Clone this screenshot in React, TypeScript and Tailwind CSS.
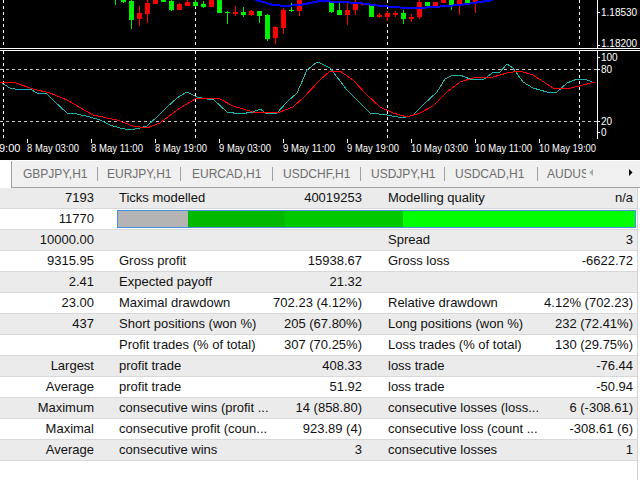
import React from 'react';

type Candle = [number, number, number, number, number, 'g' | 'r'];

// center x, body top, body bottom, wick top, wick bottom, colour
const candles: Candle[] = [
  [115.5, -4, -1, 0, 5, 'g'],
  [123.5, 0, 2, 0, 3, 'g'],
  [131.5, 1, 20, 0, 29, 'g'],
  [139.5, 13, 19, 6, 26, 'r'],
  [147.5, 3, 14, 0, 23, 'r'],
  [155.5, 0, 4, 0, 4, 'r'],
  [163.5, 0, 2, 0, 2, 'g'],
  [171.5, 1, 10, 0, 11, 'g'],
  [179.5, 4, 10, 3, 10, 'r'],
  [187.5, 2, 6, 0, 6, 'r'],
  [195.5, 2, 6, 0, 7, 'g'],
  [203.5, 4, 7, 1, 8, 'g'],
  [211.5, 0, 7, 0, 7, 'r'],
  [219.5, 0, 13, 0, 13, 'g'],
  [227.5, 12, 13, 11, 24, 'g'],
  [235.5, 12, 14, 6, 16, 'r'],
  [243.5, 12, 15, 7, 17, 'g'],
  [251.5, 11, 15, 10, 16, 'r'],
  [259.5, 11, 16, 11, 23, 'g'],
  [267.5, 15, 39, 14, 41, 'g'],
  [275.5, 27, 38, 26, 44, 'r'],
  [283.5, 10, 28, 8, 34, 'r'],
  [291.5, 10, 11, 3, 12, 'g'],
  [299.5, 0, 11, 0, 16, 'r'],
  [331.5, 2, 12, 2, 13, 'g'],
  [339.5, 10, 15, 3, 15, 'g'],
  [347.5, 10, 15, 1, 25, 'r'],
  [355.5, 3, 10, 0, 15, 'r'],
  [363.5, 3, 5, 3, 5, 'r'],
  [371.5, 5, 17, 5, 17, 'g'],
  [379.5, 15, 17, 13, 18, 'r'],
  [387.5, 13, 17, 11, 21, 'r'],
  [395.5, 13, 15, 11, 17, 'r'],
  [403.5, 13, 19, 10, 24, 'g'],
  [411.5, 17, 19, 14, 22, 'r'],
  [419.5, 2, 17, 0, 19, 'r'],
  [427.5, 2, 6, 2, 6, 'g'],
  [435.5, 2, 6, 2, 6, 'r'],
  [443.5, 0, 3, 0, 3, 'r'],
  [451.5, 0, 5, 0, 10, 'g'],
  [459.5, 0, 5, 0, 15, 'r'],
  [467.5, 0, 4, 0, 4, 'g'],
  [475.5, 0, 3, 0, 13, 'r'],
];

const maLine =
  '255,0 263,2 270,4 273,5 287,6 297,5 300,5 310,3 320,1 340,2 360,3 380,6 395,7 407,8 420,8 433,7 447,6 460,5 473,3 487,1 493,0';

const stochMain =
  '0,82 10,88 20,90 30,89 37,93 47,94 53,100 67,113 77,114 90,117 100,120 110,125 120,128 130,130 140,128 147,126 157,117 167,107 177,98 187,92 197,97 207,99 213,99 227,112 240,114 253,112 260,109 267,114 277,113 287,102 297,93 307,70 317,62 320,63 330,68 347,90 370,113 387,115 403,118 413,115 423,105 437,92 445,79 453,75 460,75 470,79 483,80 492,73 500,72 507,64 513,68 523,82 533,88 547,92 557,92 567,83 577,79 587,80 595,83';

const stochSignal =
  '0,82 13,82 33,89 50,93 67,100 93,115 117,120 133,126 147,128 160,123 180,108 197,98 207,98 220,99 233,106 253,112 267,113 280,112 293,107 303,98 320,80 330,71 340,71 353,80 367,95 380,107 393,113 407,117 420,113 433,106 447,92 460,82 473,78 493,77 507,73 520,71 533,75 553,88 567,89 583,85 595,82';

const timeLabels: Array<[number, string]> = [
  [27, '8 May 03:00'],
  [91, '8 May 11:00'],
  [155, '8 May 19:00'],
  [219, '9 May 03:00'],
  [283, '9 May 11:00'],
  [347, '9 May 19:00'],
  [411, '10 May 03:00'],
  [475, '10 May 11:00'],
  [539, '10 May 19:00'],
];

function Chart() {
  const font = { fontFamily: "'Liberation Sans', Arial, sans-serif" };
  return (
    <svg width="640" height="160" viewBox="0 0 640 160" className="block" shapeRendering="crispEdges">
      <rect x="0" y="0" width="640" height="160" fill="#000" />

      {/* grid */}
      {[3.5, 195.5, 387.5, 579.5].map((x) => (
        <g key={x}>
          <line x1={x} y1="0" x2={x} y2="48" stroke="#fff" strokeDasharray="3 3" />
          <line x1={x} y1="51" x2={x} y2="138" stroke="#fff" strokeDasharray="3 3" />
        </g>
      ))}
      <line x1="0" y1="69.5" x2="597" y2="69.5" stroke="#c8c8c8" strokeDasharray="3 3" />
      <line x1="0" y1="121.5" x2="597" y2="121.5" stroke="#c8c8c8" strokeDasharray="3 3" />

      {/* candles */}
      {candles.map(([c, bt, bb, wt, wb, col], i) => {
        const fill = col === 'g' ? '#00f000' : '#ff0000';
        return (
          <g key={i}>
            <rect x={c - 0.5} y={wt} width="1" height={Math.max(1, wb - wt)} fill={fill} />
            <rect x={c - 2.5} y={bt} width="5" height={Math.max(1, bb - bt)} fill={fill} />
          </g>
        );
      })}
      <polyline points={maLine} fill="none" stroke="#0000ff" strokeWidth="2" />

      {/* stochastic */}
      <polyline points={stochMain} fill="none" stroke="#20b2aa" strokeWidth="1" />
      <polyline points={stochSignal} fill="none" stroke="#ff0000" strokeWidth="1" />

      {/* frame */}
      <line x1="0" y1="48.5" x2="640" y2="48.5" stroke="#fff" />
      <line x1="0" y1="50.5" x2="640" y2="50.5" stroke="#fff" />
      <line x1="597.5" y1="0" x2="597.5" y2="48" stroke="#fff" />
      <line x1="597.5" y1="51" x2="597.5" y2="139" stroke="#fff" />
      {[12, 45, 57, 69, 121, 132].map((y) => (
        <line key={y} x1="597" y1={y + 0.5} x2="600" y2={y + 0.5} stroke="#fff" />
      ))}

      {/* price axis */}
      <g fill="#fff" fontSize="10" style={font}>
        <text x="601" y="16">1.18530</text>
        <text x="601" y="47">1.18200</text>
        <text x="601" y="61">100</text>
        <text x="601" y="73">80</text>
        <text x="601" y="125">20</text>
        <text x="601" y="136">0</text>
      </g>

      {/* time axis */}
      <g fill="#fff" fontSize="11" style={font}>
        <text x="-1" y="152">9:00</text>
        {timeLabels.map(([x, t]) => (
          <g key={t}>
            <line x1={x + 0.5} y1="139" x2={x + 0.5} y2="143" stroke="#fff" />
            <text x={x} y="152" textLength={t.length > 11 ? 57 : 52} lengthAdjust="spacingAndGlyphs">
              {t}
            </text>
          </g>
        ))}
      </g>
    </svg>
  );
}

const tabs: Array<{ name: string; w: string; pl: string }> = [
  { name: 'GBPJPY,H1', w: 'w-[85px]', pl: 'pl-[11px]' },
  { name: 'EURJPY,H1', w: 'w-[82px]', pl: 'pl-[9px]' },
  { name: 'EURCAD,H1', w: 'w-[91px]', pl: 'pl-[11px]' },
  { name: 'USDCHF,H1', w: 'w-[87px]', pl: 'pl-[10px]' },
  { name: 'USDJPY,H1', w: 'w-[83px]', pl: 'pl-[10px]' },
  { name: 'USDCAD,H1', w: 'w-[92px]', pl: 'pl-[10px]' },
];

function TabStrip() {
  return (
    <div className="flex h-[28px] border-t border-white bg-[#f0f0f0] text-[12px] text-[#6e6e6e]">
      <div className="w-[12px] h-full bg-white border-r border-[#a0a0a0]" />
      <div className="flex flex-1 border-b border-[#a0a0a0]">
        <div className="flex items-center w-[574px] overflow-hidden whitespace-nowrap">
          {tabs.map((t) => (
            <React.Fragment key={t.name}>
              <div className={`${t.w} ${t.pl} shrink-0`}>{t.name}</div>
              <div className="w-px h-[14px] bg-[#a0a0a0] shrink-0" />
            </React.Fragment>
          ))}
          <div className="pl-[9px] shrink-0">AUDUSD,H1</div>
        </div>
        <div className="flex items-center flex-1">
          <svg width="54" height="26" className="block">
            <polygon points="7,8 7,15 3.5,11.5" fill="#a8a8a8" />
            <polygon points="43,8 43,15 46.5,11.5" fill="#000" />
          </svg>
        </div>
      </div>
    </div>
  );
}

type Row = [string, string, string, string, string];

const rows: Array<Row | 'bar'> = [
  ['7193', 'Ticks modelled', '40019253', 'Modelling quality', 'n/a'],
  'bar',
  ['10000.00', '', '', 'Spread', '3'],
  ['9315.95', 'Gross profit', '15938.67', 'Gross loss', '-6622.72'],
  ['2.41', 'Expected payoff', '21.32', '', ''],
  ['23.00', 'Maximal drawdown', '702.23 (4.12%)', 'Relative drawdown', '4.12% (702.23)'],
  ['437', 'Short positions (won %)', '205 (67.80%)', 'Long positions (won %)', '232 (72.41%)'],
  ['', 'Profit trades (% of total)', '307 (70.25%)', 'Loss trades (% of total)', '130 (29.75%)'],
  ['Largest', 'profit trade', '408.33', 'loss trade', '-76.44'],
  ['Average', 'profit trade', '51.92', 'loss trade', '-50.94'],
  ['Maximum', 'consecutive wins (profit ...', '14 (858.80)', 'consecutive losses (loss...', '6 (-308.61)'],
  ['Maximal', 'consecutive profit (coun...', '923.89 (4)', 'consecutive loss (count ...', '-308.61 (6)'],
  ['Average', 'consecutive wins', '3', 'consecutive losses', '1'],
];

function QualityBar() {
  return (
    <div className="flex flex-1 mr-[1px] ml-[23px] h-[18px] border border-[#4a90e2]">
      <div className="w-[70px] bg-[#b4b4b4]" />
      <div className="w-[97px] bg-[#00b900]" />
      <div className="w-[118px] bg-[#00c800]" />
      <div className="flex-1 bg-[#00ff00]" />
    </div>
  );
}

function Report() {
  return (
    <div className="w-[638px] border-r border-[#d4d4d4] text-[13px] text-[#111] whitespace-nowrap">
      {rows.map((r, i) => (
        <div
          key={i}
          className={`flex items-center h-[21px] border-b border-[#d8d8d8] ${i % 2 === 0 ? 'bg-[#ebebeb]' : 'bg-white'}`}
        >
          {r === 'bar' ? (
            <>
              <div className="w-[94px] text-right">11770</div>
              <QualityBar />
            </>
          ) : (
            <>
              <div className="w-[94px] text-right">{r[0]}</div>
              <div className="w-[150px] ml-[25px] overflow-hidden">{r[1]}</div>
              <div className="w-[93px] text-right">{r[2]}</div>
              <div className="w-[150px] ml-[26px] overflow-hidden">{r[3]}</div>
              <div className="w-[95px] text-right">{r[4]}</div>
            </>
          )}
        </div>
      ))}
      <div className="h-[20px]" />
    </div>
  );
}

export default function App() {
  return (
    <div className="w-[640px] h-[480px] overflow-hidden bg-white font-['Liberation_Sans',Arial,sans-serif]">
      <Chart />
      <TabStrip />
      <Report />
    </div>
  );
}
